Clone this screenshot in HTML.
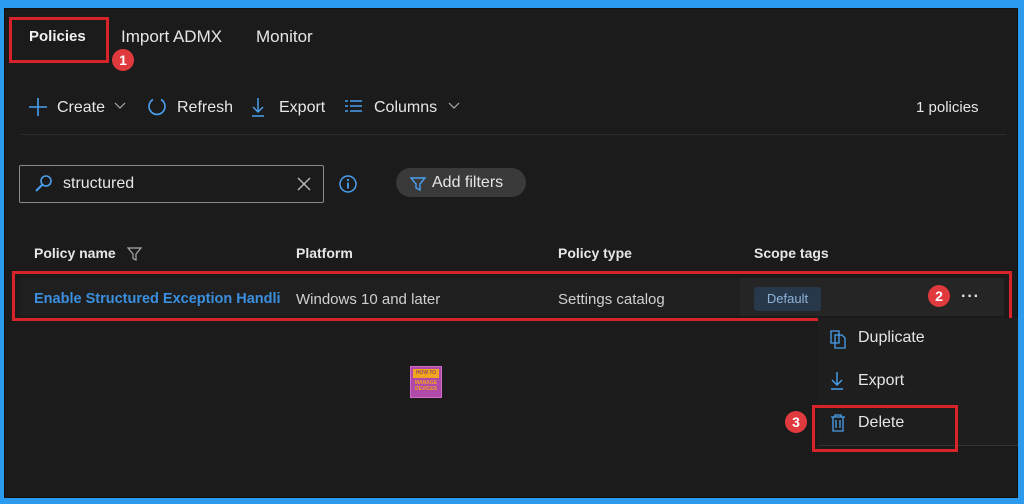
<!DOCTYPE html>
<html><head><meta charset="utf-8"><style>
*{box-sizing:border-box;margin:0;padding:0}
body{width:1024px;height:504px;background:#2b9bf0;position:relative;overflow:hidden;font-family:"Liberation Sans",sans-serif;color:#e6e6e6}
#main{position:absolute;left:4px;top:8px;width:1014px;height:490px;background:#1b1b1b;border:1px solid #111}
.a{position:absolute;white-space:nowrap}
.red{position:absolute;border:3px solid #d8232a}
.badge{position:absolute;width:22px;height:22px;border-radius:50%;background:#e0393e;color:#fff;font-size:14px;font-weight:bold;text-align:center;line-height:22px}
.t{font-size:16px}
.b{font-weight:bold}
svg{position:absolute}
</style></head><body>
<div id="main"></div>
<div class="a b" style="left:29px;top:28px;color:#f0f0f0;font-size:15px">Policies</div>
<div class="a" style="left:121px;top:27px;font-size:17px">Import ADMX</div>
<div class="a" style="left:256px;top:27px;font-size:17px">Monitor</div>
<div class="red" style="left:9px;top:17px;width:100px;height:46px"></div>
<div class="badge" style="left:112px;top:49px">1</div>

<svg style="left:28px;top:97px" width="20" height="20"><path d="M10 1v18M1 10h18" stroke="#4aa0ef" stroke-width="1.6" fill="none"/></svg>
<div class="a t" style="left:57px;top:99px">Create</div>
<svg style="left:113px;top:101px" width="14" height="10"><path d="M2 2l5 5 5-5" stroke="#aaa" stroke-width="1.2" fill="none"/></svg>
<svg style="left:146px;top:96px" width="22" height="22"><path d="M7 3.5A8 8 0 1 0 15 3.5" stroke="#4aa0ef" stroke-width="1.6" fill="none"/></svg>
<div class="a t" style="left:177px;top:99px">Refresh</div>
<svg style="left:250px;top:96px" width="16" height="22"><path d="M8 2v14M3 11l5 5 5-5M2 20h12" stroke="#4aa0ef" stroke-width="1.5" fill="none"/></svg>
<div class="a t" style="left:279px;top:99px">Export</div>
<svg style="left:344px;top:99px" width="20" height="16"><path d="M1 2h3M1 7h3M1 12h3M6 2h12M6 7h12M6 12h12" stroke="#4aa0ef" stroke-width="1.5" fill="none"/></svg>
<div class="a t" style="left:374px;top:99px">Columns</div>
<svg style="left:447px;top:101px" width="14" height="10"><path d="M2 2l5 5 5-5" stroke="#aaa" stroke-width="1.2" fill="none"/></svg>
<div class="a t" style="left:916px;top:99px;font-size:15px">1 policies</div>
<div class="a" style="left:20px;top:134px;width:986px;height:1px;background:#2c2c2c"></div>

<div class="a" style="left:19px;top:165px;width:305px;height:38px;border:1px solid #8a8a8a;border-radius:2px"></div>
<svg style="left:34px;top:174px" width="20" height="20"><circle cx="12" cy="7" r="5" stroke="#4aa0ef" stroke-width="1.6" fill="none"/><path d="M8.5 10.5L2 17" stroke="#4aa0ef" stroke-width="2"/></svg>
<div class="a t" style="left:63px;top:175px">structured</div>
<svg style="left:296px;top:176px" width="16" height="16"><path d="M2 2l12 12M14 2L2 14" stroke="#bbb" stroke-width="1.4"/></svg>
<svg style="left:338px;top:174px" width="20" height="20"><circle cx="10" cy="10" r="8" stroke="#4aa0ef" stroke-width="1.5" fill="none"/><path d="M10 8.5v6" stroke="#4aa0ef" stroke-width="1.8"/><circle cx="10" cy="6" r="1.1" fill="#4aa0ef"/></svg>
<div class="a" style="left:396px;top:168px;width:130px;height:29px;border-radius:15px;background:#3a3a3a"></div>
<svg style="left:410px;top:176px" width="16" height="16"><path d="M1 2h14l-5 6v6l-4-2v-4z" stroke="#4aa0ef" stroke-width="1.4" fill="none"/></svg>
<div class="a t" style="left:432px;top:174px">Add filters</div>

<div class="a b" style="left:34px;top:245px;font-size:14px">Policy name</div>
<svg style="left:127px;top:246px" width="16" height="16"><path d="M1 2h13l-5 6v6l-3-1.5V8z" stroke="#aaa" stroke-width="1.2" fill="none"/></svg>
<div class="a b" style="left:296px;top:245px;font-size:14px">Platform</div>
<div class="a b" style="left:558px;top:245px;font-size:14px">Policy type</div>
<div class="a b" style="left:754px;top:245px;font-size:14px">Scope tags</div>

<div class="a" style="left:20px;top:278px;width:984px;height:38px;background:#1f1f1f"></div>
<div class="a" style="left:740px;top:278px;width:264px;height:38px;background:#252525"></div>
<div class="a b" style="left:34px;top:291px;font-size:14.5px;color:#3b8fe0">Enable Structured Exception Handli</div>
<div class="a" style="left:296px;top:291px;font-size:15px;color:#d0d0d0">Windows 10 and later</div>
<div class="a" style="left:558px;top:291px;font-size:15px;color:#d0d0d0">Settings catalog</div>
<div class="a" style="left:754px;top:287px;width:67px;height:24px;border-radius:3px;background:#26384a;color:#8fb3d8;font-size:13px;text-align:center;line-height:24px">Default</div>
<div class="badge" style="left:928px;top:285px">2</div>
<div class="a b" style="left:961px;top:288px;font-size:16px;letter-spacing:1px">···</div>
<div class="red" style="left:12px;top:271px;width:1000px;height:50px"></div>

<div class="a" style="left:818px;top:318px;width:200px;height:128px;background:#1e1e1e;border-bottom:1px solid #333"></div>
<svg style="left:829px;top:329px" width="18" height="20"><path d="M2 2h8v12H2z M6 6h7l3 3v10H6z" stroke="#4aa0ef" stroke-width="1.3" fill="#1e1e1e"/></svg>
<div class="a t" style="left:858px;top:329px">Duplicate</div>
<svg style="left:830px;top:371px" width="14" height="20"><path d="M7 1v13M2 9l5 5 5-5M1 18h12" stroke="#4aa0ef" stroke-width="1.4" fill="none"/></svg>
<div class="a t" style="left:858px;top:372px">Export</div>
<svg style="left:830px;top:413px" width="16" height="20"><path d="M1 4h14M5 4V2h6v2M3 4v14h10V4M6 7v8M10 7v8" stroke="#4aa0ef" stroke-width="1.3" fill="none"/></svg>
<div class="a t" style="left:858px;top:414px">Delete</div>
<div class="red" style="left:812px;top:405px;width:146px;height:47px"></div>
<div class="badge" style="left:785px;top:411px">3</div>

<div class="a" style="left:410px;top:366px;width:32px;height:32px;background:#b04aa8;border:1px solid #d46ac6"></div>
<div class="a" style="left:413px;top:369px;width:26px;height:9px;background:#f2a51e;font-size:5px;color:#6a2a70;text-align:center;line-height:9px">HOW TO</div>
<div class="a" style="left:412px;top:380px;width:28px;font-size:5px;color:#f2a51e;text-align:center;line-height:6px;font-weight:bold">MANAGE<br>DEVICES</div>
</body></html>
